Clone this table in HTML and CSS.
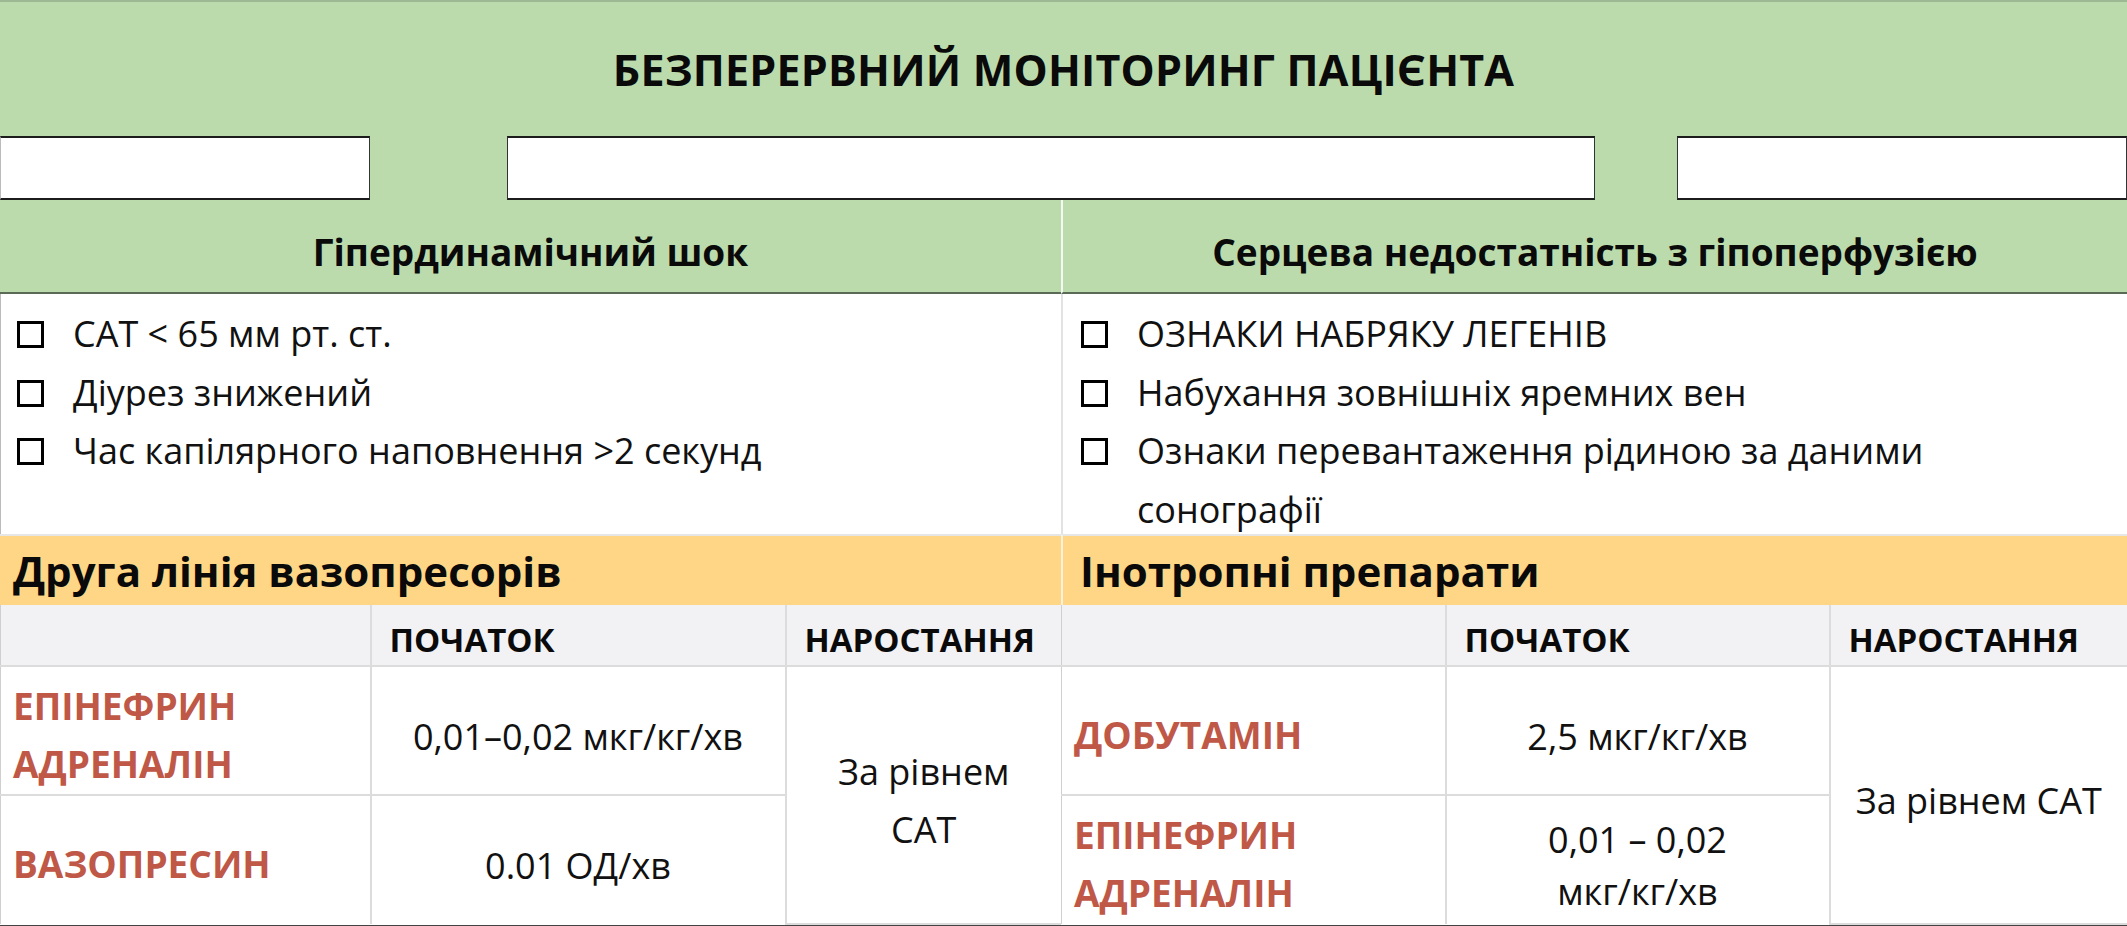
FILE: index.html
```html
<!DOCTYPE html>
<html lang="uk">
<head>
<meta charset="utf-8">
<title>Безперервний моніторинг пацієнта</title>
<link rel="stylesheet" href="styles.css">
</head>
<body>
<div class="sheet">
  <header class="title-band"><h1>БЕЗПЕРЕРВНИЙ МОНІТОРИНГ ПАЦІЄНТА</h1></header>
  <div class="fields">
    <div class="field"></div>
    <div class="gap"></div>
    <div class="field"></div>
    <div class="gap"></div>
    <div class="field"></div>
  </div>
  <div class="grid">
    <div class="sec-head">Гіпердинамічний шок</div>
    <div class="sec-head col-r">Серцева недостатність з гіпоперфузією</div>

    <ul class="checks">
      <li><span class="box"></span><span>САТ &lt; 65 мм рт. ст.</span></li>
      <li><span class="box"></span><span>Діурез знижений</span></li>
      <li><span class="box"></span><span>Час капілярного наповнення &gt;2 секунд</span></li>
    </ul>
    <ul class="checks col-r">
      <li><span class="box"></span><span>ОЗНАКИ НАБРЯКУ ЛЕГЕНІВ</span></li>
      <li><span class="box"></span><span>Набухання зовнішніх яремних вен</span></li>
      <li><span class="box"></span><span>Ознаки перевантаження рідиною за даними<br>сонографії</span></li>
    </ul>

    <div class="drug-head">Друга лінія вазопресорів</div>
    <div class="drug-head col-r">Інотропні препарати</div>

    <table class="dose dose-l">
      <colgroup><col class="c1"><col class="c2"><col></colgroup>
      <thead>
        <tr><th></th><th>ПОЧАТОК</th><th>НАРОСТАННЯ</th></tr>
      </thead>
      <tbody>
        <tr class="r1"><td class="drug">ЕПІНЕФРИН АДРЕНАЛІН</td><td class="val">0,01–0,02 мкг/кг/хв</td><td class="val" rowspan="2">За рівнем САТ</td></tr>
        <tr class="r2"><td class="drug">ВАЗОПРЕСИН</td><td class="val">0.01 ОД/хв</td></tr>
      </tbody>
    </table>
    <table class="dose dose-r">
      <colgroup><col class="c1"><col class="c2"><col></colgroup>
      <thead>
        <tr><th></th><th>ПОЧАТОК</th><th>НАРОСТАННЯ</th></tr>
      </thead>
      <tbody>
        <tr class="r1"><td class="drug">ДОБУТАМІН</td><td class="val">2,5 мкг/кг/хв</td><td class="val" rowspan="2">За рівнем САТ</td></tr>
        <tr class="r2"><td class="drug">ЕПІНЕФРИН АДРЕНАЛІН</td><td class="val tight">0,01 – 0,02<br>мкг/кг/хв</td></tr>
      </tbody>
    </table>
  </div>
</div>
</body>
</html>
```

FILE: styles.css
```css
* { box-sizing: border-box; }
html, body { margin: 0; padding: 0; background: #fff; }
body {
  font-family: "Open Sans", "Noto Sans", "Liberation Sans", sans-serif;
  color: #111;
}
.sheet { width: 2127px; height: 926px; overflow: hidden; }

.title-band {
  height: 136px;
  background: #bcdbac;
  border-top: 2px solid #9cb993;
  display: flex;
  align-items: center;
  justify-content: center;
}
.title-band h1 {
  margin: 0;
  font-size: 43px;
  font-weight: 700;
  letter-spacing: 0.2px;
  color: #0a0a0a;
}

.fields {
  height: 64px;
  background: #bcdbac;
  display: grid;
  grid-template-columns: 370px 137px 1088px 82px 1fr;
}
.field {
  background: #fff;
  border-top: 2px solid #1c1c1c;
  border-bottom: 2px solid #1c1c1c;
  border-left: 1px solid #333;
  border-right: 1px solid #333;
}
.field:first-child { border-left: 1px solid #bbb; }

.grid {
  display: grid;
  grid-template-columns: 1061px 1fr;
  grid-template-rows: 94px 240px 71px auto;
  border-bottom: 2px solid #444;
}
.col-r { border-left: 2px solid #f4f7f2; }

.sec-head {
  background: #bcdbac;
  border-bottom: 2px solid #5b6a56;
  display: flex;
  align-items: center;
  justify-content: center;
  padding-top: 10px;
  font-weight: 700;
  font-size: 37px;
  color: #0a0a0a;
}

.checks {
  list-style: none;
  margin: 0;
  padding: 11px 0 0 16px;
  font-size: 36px;
  line-height: 58.5px;
  border-left: 1px solid #bbb;
}
.checks.col-r { border-left: 2px solid #e2e2e2; padding-left: 18px; }
.checks li { display: flex; align-items: flex-start; }
.box {
  flex: none;
  width: 27px;
  height: 27px;
  border: 3px solid #000;
  margin: 16px 29px 0 0;
}

.drug-head {
  background: #fed686;
  border-top: 2px solid #e6e6e6;
  display: flex;
  align-items: center;
  padding-left: 13px;
  font-weight: 700;
  font-size: 42px;
  color: #0a0a0a;
}
.drug-head.col-r { border-left: 2px solid #fbf2de; padding-left: 17px; }

.dose {
  width: 100%;
  border-collapse: collapse;
  table-layout: fixed;
}
.dose-l .c1 { width: 370px; }
.dose-l .c2 { width: 415px; }
.dose-r .c1 { width: 384px; }
.dose-r .c2 { width: 384px; }
.dose th, .dose td { border: 2px solid #dcdcdc; }
.dose tr > :first-child { border-left: 1px solid #cfcfcf; }
.dose tr > :last-child { border-right: 0; }
.dose tbody tr.r2 td { border-bottom: 0; }
.dose th {
  height: 61px;
  background: #f2f2f4;
  text-align: left;
  padding: 8px 0 0 18px;
  font-weight: 700;
  font-size: 33px;
  color: #0a0a0a;
  border-top: 0;
}
.dose .r1 td { height: 129px; }
.dose .r2 td { height: 129px; }
.dose td { padding: 8px 18px 0; }
.drug {
  color: #bf5847;
  font-weight: 700;
  font-size: 37px;
  line-height: 58px;
  padding-left: 12px !important;
}
.val {
  text-align: center;
  font-size: 36px;
  line-height: 58px;
  color: #111;
  padding-top: 12px !important;
}
.val.tight { line-height: 52px; }
```
